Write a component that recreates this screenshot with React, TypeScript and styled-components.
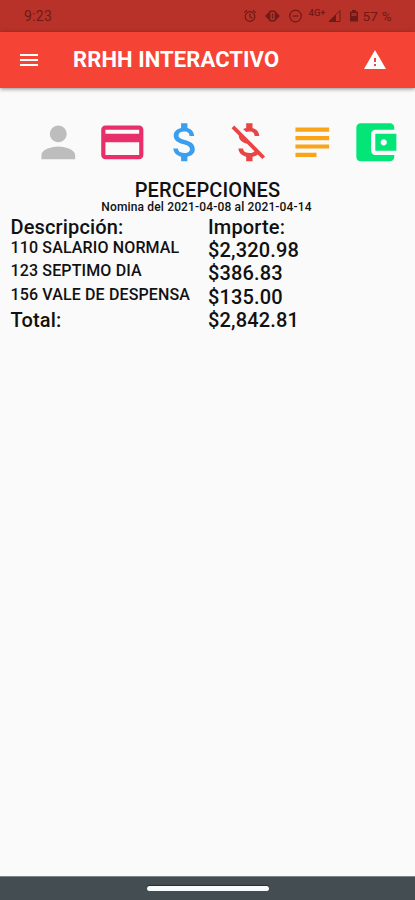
import React from "react";
import styled, { createGlobalStyle } from "styled-components";
import {
  MdAccountBalanceWallet,
  MdAttachMoney,
  MdMenu,
  MdMoneyOff,
  MdPayment,
  MdPerson,
  MdSubject,
  MdWarning,
} from "react-icons/md";

const GlobalStyle = createGlobalStyle`
  *, *::before, *::after { box-sizing: border-box; }
  html, body { margin: 0; padding: 0; }
  body { background: #fafafa; font-family: Roboto, "Liberation Sans", sans-serif; }
`;

const Screen = styled.div`
  display: flex;
  flex-direction: column;
  width: 415px;
  height: 900px;
  overflow: hidden;
  background: #fafafa;
  color: #111;
`;

const StatusBar = styled.div`
  display: flex;
  align-items: center;
  height: 32px;
  flex: none;
  padding: 0 23px 0 24px;
  background: #b93229;
  color: #6e1a16;
  font-size: 14px;
`;

const Clock = styled.span`
  flex: 1;
  letter-spacing: 0.25px;
`;

const StatusIcons = styled.svg`
  display: block;
  flex: none;
  margin-right: 3px;
`;

const Battery = styled.span`
  font-size: 13.5px;
  letter-spacing: 0.3px;
  white-space: nowrap;
`;

const AppBar = styled.header`
  display: flex;
  align-items: center;
  flex: none;
  height: 56px;
  padding: 0 28px 0 17px;
  background: #f54336;
  color: #fff;
  box-shadow: 0 1px 4px rgba(0, 0, 0, 0.45);
`;

const Title = styled.h1`
  flex: 1;
  margin: 0 0 0 32px;
  font-size: 22px;
  font-weight: 700;
  line-height: 28px;
  letter-spacing: 0.1px;
  white-space: nowrap;
`;

const IconRow = styled.nav`
  display: grid;
  grid-template-columns: repeat(6, 63.3px);
  justify-items: center;
  flex: none;
  padding: 29px 0 0 27px;
  height: 91px;
`;

const IconButton = styled.span<{ $color: string }>`
  display: block;
  height: 51px;
  color: ${(p) => p.$color};
  font-size: 50.6px;
  svg { display: block; }
`;

const Heading = styled.h2`
  flex: none;
  margin: 0;
  font-size: 20px;
  font-weight: 500;
  line-height: 22px;
  letter-spacing: 0.15px;
  text-align: center;
`;

const Period = styled.p`
  flex: none;
  margin: 0 0 0 -2px;
  font-size: 12px;
  font-weight: 500;
  line-height: 13px;
  text-align: center;
  letter-spacing: 0.15px;
`;

const Table = styled.section`
  display: grid;
  grid-template-columns: 197.5px 1fr;
  grid-template-rows: 23px 23.3px 23.3px 23.3px 24px;
  padding: 2px 0 0 10.5px;
  flex: 1;
  align-content: start;
`;

const Cell = styled.span<{ $small?: boolean }>`
  font-size: ${(p) => (p.$small ? "16px" : "20px")};
  line-height: ${(p) => (p.$small ? "18px" : "23px")};
  letter-spacing: ${(p) => (p.$small ? "0.14px" : "0.15px")};
  font-weight: 500;
  white-space: nowrap;
`;

const NavigationBar = styled.footer`
  display: flex;
  justify-content: center;
  flex: none;
  height: 24px;
  padding-top: 9px;
  border-top: 1px solid #7b8486;
  background: #444d52;
`;

const HomeHandle = styled.span`
  width: 122px;
  height: 5px;
  border-radius: 3px;
  background: #f8fcfd;
  box-shadow: 0 -1px 1px #262e33;
`;

const actions = [
  { name: "Perfil", color: "#bdbdbd", Icon: MdPerson },
  { name: "Tarjeta", color: "#e92f69", Icon: MdPayment },
  { name: "Percepciones", color: "#3b9ff0", Icon: MdAttachMoney },
  { name: "Deducciones", color: "#e84545", Icon: MdMoneyOff },
  { name: "Detalle", color: "#faa519", Icon: MdSubject },
  { name: "Cartera", color: "#04e577", Icon: MdAccountBalanceWallet },
];

const rows = [
  { label: "110 SALARIO NORMAL", amount: "$2,320.98" },
  { label: "123 SEPTIMO DIA", amount: "$386.83" },
  { label: "156 VALE DE DESPENSA", amount: "$135.00" },
];

export default function App() {
  return (
    <Screen>
      <GlobalStyle />
      <StatusBar>
        <Clock>9:23</Clock>
        <StatusIcons width="116" height="20" viewBox="0 0 116 20" fill="none" stroke="currentColor">
          <circle cx="7" cy="10.5" r="4.8" strokeWidth="1.2" />
          <path d="M1.3 6.6 4 4.2M12.7 6.6 10 4.2M7 7.5v3.3l2.2 1.4" strokeWidth="1.2" />
          <path d="m26.5 6-4 4 4 4M32.5 6l4 4-4 4" fill="currentColor" strokeWidth="0.8" />
          <rect x="26.7" y="5.2" width="5.6" height="9.6" rx="1" fill="#b93229" strokeWidth="1.4" />
          <path d="M29.500 7.500v5" strokeWidth="1.200" />
          <circle cx="52.5" cy="10" r="5.8" strokeWidth="1.2" />
          <path d="M49.5 10h6" strokeWidth="1.2" />
          <text x="65.5" y="9.7" fill="currentColor" stroke="none" fontSize="9.5" fontWeight="500">4G+</text>
          <path d="M86 15.5 97 4.5v11z" strokeWidth="1" />
          <path d="M86 15.5 93 8.5v7z" fill="currentColor" stroke="none" />
          <path d="M107 5.5h2V4h4v1.5h2v10h-8z" fill="currentColor" stroke="none" />
          <path d="M108.5 7h5v3h-5z" fill="#a52c25" stroke="none" />
        </StatusIcons>
        <Battery>57 %</Battery>
      </StatusBar>
      <AppBar>
        <MdMenu size={24} />
        <Title>RRHH INTERACTIVO</Title>
        <MdWarning size={24} />
      </AppBar>
      <IconRow>
        {actions.map(({ name, color, Icon }) => (
          <IconButton key={name} $color={color}>
            <Icon />
          </IconButton>
        ))}
      </IconRow>
      <Heading>PERCEPCIONES</Heading>
      <Period>Nomina del 2021-04-08 al 2021-04-14</Period>
      <Table>
        <Cell>Descripción:</Cell>
        <Cell>Importe:</Cell>
        {rows.map((row) => (
          <React.Fragment key={row.label}>
            <Cell $small>{row.label}</Cell>
            <Cell>{row.amount}</Cell>
          </React.Fragment>
        ))}
        <Cell>Total:</Cell>
        <Cell>$2,842.81</Cell>
      </Table>
      <NavigationBar>
        <HomeHandle />
      </NavigationBar>
    </Screen>
  );
}
